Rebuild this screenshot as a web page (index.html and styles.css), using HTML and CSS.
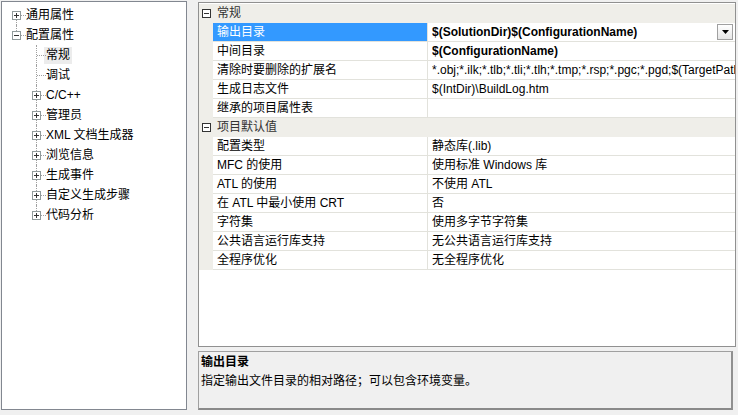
FILE: index.html
```html
<!DOCTYPE html>
<html>
<head>
<meta charset="utf-8">
<link rel="stylesheet" href="styles.css">
</head>
<body>
<div class="app">
  <div class="tree">
    <div class="node">
      <span class="cell vdown h"><span class="box"><svg width="9" height="9" viewBox="0 0 9 9"><rect x="0.5" y="0.5" width="8" height="8" fill="#fff" stroke="#919b9c"/><path d="M2 4.5h5M4.5 2v5" stroke="#333"/></svg></span></span>
      <span class="label">通用属性</span>
    </div>
    <div class="node">
      <span class="cell vhalf h"><span class="box"><svg width="9" height="9" viewBox="0 0 9 9"><rect x="0.5" y="0.5" width="8" height="8" fill="#fff" stroke="#919b9c"/><path d="M2 4.5h5" stroke="#333"/></svg></span></span>
      <span class="label">配置属性</span>
    </div>
    <div class="node">
      <span class="cell"></span><span class="cell v h"></span>
      <span class="label sel">常规</span>
    </div>
    <div class="node">
      <span class="cell"></span><span class="cell v h"></span>
      <span class="label">调试</span>
    </div>
    <div class="node">
      <span class="cell"></span><span class="cell v h"><span class="box"><svg width="9" height="9" viewBox="0 0 9 9"><rect x="0.5" y="0.5" width="8" height="8" fill="#fff" stroke="#919b9c"/><path d="M2 4.5h5M4.5 2v5" stroke="#333"/></svg></span></span>
      <span class="label">C/C++</span>
    </div>
    <div class="node">
      <span class="cell"></span><span class="cell v h"><span class="box"><svg width="9" height="9" viewBox="0 0 9 9"><rect x="0.5" y="0.5" width="8" height="8" fill="#fff" stroke="#919b9c"/><path d="M2 4.5h5M4.5 2v5" stroke="#333"/></svg></span></span>
      <span class="label">管理员</span>
    </div>
    <div class="node">
      <span class="cell"></span><span class="cell v h"><span class="box"><svg width="9" height="9" viewBox="0 0 9 9"><rect x="0.5" y="0.5" width="8" height="8" fill="#fff" stroke="#919b9c"/><path d="M2 4.5h5M4.5 2v5" stroke="#333"/></svg></span></span>
      <span class="label">XML 文档生成器</span>
    </div>
    <div class="node">
      <span class="cell"></span><span class="cell v h"><span class="box"><svg width="9" height="9" viewBox="0 0 9 9"><rect x="0.5" y="0.5" width="8" height="8" fill="#fff" stroke="#919b9c"/><path d="M2 4.5h5M4.5 2v5" stroke="#333"/></svg></span></span>
      <span class="label">浏览信息</span>
    </div>
    <div class="node">
      <span class="cell"></span><span class="cell v h"><span class="box"><svg width="9" height="9" viewBox="0 0 9 9"><rect x="0.5" y="0.5" width="8" height="8" fill="#fff" stroke="#919b9c"/><path d="M2 4.5h5M4.5 2v5" stroke="#333"/></svg></span></span>
      <span class="label">生成事件</span>
    </div>
    <div class="node">
      <span class="cell"></span><span class="cell v h"><span class="box"><svg width="9" height="9" viewBox="0 0 9 9"><rect x="0.5" y="0.5" width="8" height="8" fill="#fff" stroke="#919b9c"/><path d="M2 4.5h5M4.5 2v5" stroke="#333"/></svg></span></span>
      <span class="label">自定义生成步骤</span>
    </div>
    <div class="node">
      <span class="cell"></span><span class="cell vhalf h"><span class="box"><svg width="9" height="9" viewBox="0 0 9 9"><rect x="0.5" y="0.5" width="8" height="8" fill="#fff" stroke="#919b9c"/><path d="M2 4.5h5M4.5 2v5" stroke="#333"/></svg></span></span>
      <span class="label">代码分析</span>
    </div>
  </div>

  <div class="right">
    <div class="grid">
      <div class="row cat">
        <span class="m"><svg width="9" height="9" viewBox="0 0 9 9"><rect x="0.5" y="0.5" width="8" height="8" fill="#fff" stroke="#333"/><path d="M2 4.5h5" stroke="#333"/></svg></span>
        <span class="catname">常规</span>
      </div>
      <div class="row">
        <span class="m"></span><span class="name selected">输出目录</span>
        <span class="val"><span class="vt b">$(SolutionDir)$(ConfigurationName)</span><span class="dd"><svg width="7" height="4" viewBox="0 0 7 4"><path d="M0 0h7L3.5 4z" fill="#000"/></svg></span></span>
      </div>
      <div class="row"><span class="m"></span><span class="name">中间目录</span><span class="val"><span class="vt b">$(ConfigurationName)</span></span></div>
      <div class="row"><span class="m"></span><span class="name">清除时要删除的扩展名</span><span class="val"><span class="vt">*.obj;*.ilk;*.tlb;*.tli;*.tlh;*.tmp;*.rsp;*.pgc;*.pgd;$(TargetPath)</span></span></div>
      <div class="row"><span class="m"></span><span class="name">生成日志文件</span><span class="val"><span class="vt">$(IntDir)\BuildLog.htm</span></span></div>
      <div class="row"><span class="m"></span><span class="name">继承的项目属性表</span><span class="val"><span class="vt"></span></span></div>
      <div class="row cat">
        <span class="m"><svg width="9" height="9" viewBox="0 0 9 9"><rect x="0.5" y="0.5" width="8" height="8" fill="#fff" stroke="#333"/><path d="M2 4.5h5" stroke="#333"/></svg></span>
        <span class="catname">项目默认值</span>
      </div>
      <div class="row"><span class="m"></span><span class="name">配置类型</span><span class="val"><span class="vt">静态库(.lib)</span></span></div>
      <div class="row"><span class="m"></span><span class="name">MFC 的使用</span><span class="val"><span class="vt">使用标准 Windows 库</span></span></div>
      <div class="row"><span class="m"></span><span class="name">ATL 的使用</span><span class="val"><span class="vt">不使用 ATL</span></span></div>
      <div class="row"><span class="m"></span><span class="name">在 ATL 中最小使用 CRT</span><span class="val"><span class="vt">否</span></span></div>
      <div class="row"><span class="m"></span><span class="name">字符集</span><span class="val"><span class="vt">使用多字节字符集</span></span></div>
      <div class="row"><span class="m"></span><span class="name">公共语言运行库支持</span><span class="val"><span class="vt">无公共语言运行库支持</span></span></div>
      <div class="row"><span class="m"></span><span class="name">全程序优化</span><span class="val"><span class="vt">无全程序优化</span></span></div>
    </div>
    <div class="desc">
      <div class="dtitle">输出目录</div>
      <div class="dtext">指定输出文件目录的相对路径；可以包含环境变量。</div>
    </div>
  </div>
</div>
</body>
</html>
```

FILE: styles.css
```css
html, body {
  margin: 0;
  padding: 0;
  background: #f0f0f0;
}
body {
  font-family: "Liberation Sans", "Noto Sans CJK SC", sans-serif;
  font-size: 12px;
  color: #000;
  width: 738px;
  height: 415px;
  overflow: hidden;
}
.app {
  display: flex;
  padding: 1px 0 0 1px;
  box-sizing: border-box;
  height: 415px;
}
.tree {
  width: 186px;
  height: 409px;
  box-sizing: border-box;
  border: 1px solid #828790;
  background: #fff;
  padding: 3px 0 0 4px;
  flex: none;
}
.node {
  display: flex;
  align-items: center;
  height: 20px;
  white-space: nowrap;
}
.cell {
  position: relative;
  width: 20px;
  height: 20px;
  flex: none;
}
.cell.v::before,
.cell.vhalf::before,
.cell.vdown::before {
  content: "";
  position: absolute;
  left: 10px;
  border-left: 1px dotted #a0a0a0;
}
.cell.v::before { top: 0; bottom: 0; }
.cell.vhalf::before { top: 0; height: 10px; }
.cell.vdown::before { top: 10px; bottom: 0; }
.cell.h::after {
  content: "";
  position: absolute;
  left: 11px;
  right: 0;
  top: 10px;
  border-top: 1px dotted #a0a0a0;
}
.box {
  position: absolute;
  left: 6px;
  top: 6px;
  width: 9px;
  height: 9px;
  z-index: 1;
  display: block;
}
.box svg { display: block; }
.label {
  padding: 0 2px;
  margin-left: -2px;
  line-height: 17px;
}
.label.sel {
  background: #ececec;
}

.right {
  display: flex;
  flex-direction: column;
  margin-left: 11px;
  margin-top: 1px;
  width: 539px;
  flex: none;
}
.grid {
  height: 345px;
  box-sizing: border-box;
  border: 1px solid #909090;
  background: #fff;
  overflow: hidden;
  width: 538px;
  padding-top: 1px;
}
.row {
  display: flex;
  height: 19px;
  line-height: 19px;
  white-space: nowrap;
}
.m {
  width: 14px;
  flex: none;
  background: #efeee9;
  display: flex;
  align-items: center;
  justify-content: center;
}
.m svg { display: block; }
.name {
  width: 210px;
  flex: none;
  padding-left: 4px;
  border-right: 1px solid #e2e2dc;
  border-bottom: 1px solid #e2e2dc;
  overflow: hidden;
  line-height: 18px;
}
.name.selected {
  background: #3399ff;
  color: #fff;
}
.val {
  flex: 1;
  min-width: 0;
  display: flex;
  align-items: center;
  border-bottom: 1px solid #e2e2dc;
  padding-left: 4px;
  overflow: hidden;
}
.vt {
  flex: 1;
  min-width: 0;
  overflow: hidden;
  height: 18px;
  line-height: 18px;
}
.vt.b { font-weight: bold; }
.dd {
  flex: none;
  width: 16px;
  height: 16px;
  box-sizing: border-box;
  border: 1px solid #a0a0a0;
  background: linear-gradient(#ffffff, #e6e6e6);
  margin-right: 2px;
  display: flex;
  align-items: center;
  justify-content: center;
}
.dd svg { display: block; }
.row.cat {
  background: #efeee9;
}
.catname {
  padding-left: 4px;
  color: #333;
}

.desc {
  margin-top: 4px;
  width: 535px;
  height: 59px;
  box-sizing: border-box;
  border: 1px solid #a0a0a0;
  border-right: 2px solid #909090;
  border-bottom: 2px solid #8a8a8a;
  background: #f0f0f0;
  padding: 1px 0 0 2px;
  line-height: 19px;
}
.dtitle { font-weight: bold; }
```
